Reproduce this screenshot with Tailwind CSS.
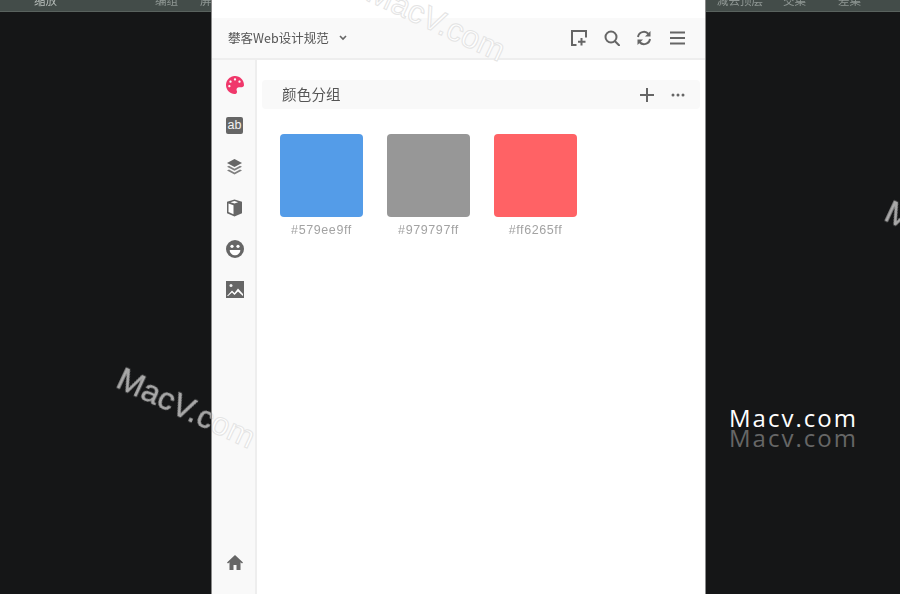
<!DOCTYPE html>
<html lang="en">
<head>
  <meta charset="UTF-8" />
  <meta name="viewport" content="width=device-width, initial-scale=1.0" />
  <title>Macv</title>
  <script src="https://cdn.jsdelivr.net/npm/@tailwindcss/browser@4"></script>
</head>
<body class="bg-[#151617] font-['Liberation_Sans','Noto_Sans_CJK_SC',sans-serif]">
  <div class="flex w-[900px] h-[594px] overflow-hidden">

    <!-- Left backdrop -->
    <div class="relative w-[211px] overflow-hidden">
      <div class="h-[12px] bg-[#434c49] border-b border-[#59625e] flex items-start text-[#b9bfbc] text-[11.500px] leading-[11px] blur-[0.5px] overflow-hidden">
        <span class="ml-[34px] w-[121px] shrink-0 font-['Noto_Sans_CJK_SC'] translate-y-[-5px]">缩放</span>
        <span class="w-[45px] shrink-0 font-['Noto_Sans_CJK_SC'] text-[#8f9794] translate-y-[-5px]">编组</span>
        <span class="font-['Noto_Sans_CJK_SC'] text-[#8f9794] translate-y-[-5px]">屏</span>
      </div>
      <span class="absolute left-[126px] top-[362px] rotate-[25deg] origin-top-left text-[32px] leading-none text-[#a9a9a9] [-webkit-text-stroke:0.5px_#a9a9a9] whitespace-nowrap blur-[0.4px]">MacV.com</span>
    </div>

    <!-- Panel -->
    <div class="relative w-[495px] shrink-0 bg-white border-x border-[#8a8a8a] flex flex-col overflow-hidden">
      <div class="h-[18px] shrink-0"></div>
      <header class="h-[42px] shrink-0 bg-[#f9f9f9] border-b-2 border-[#eeeeee] flex items-center pl-[16px] pr-[20px] text-[#666]">
        <span class="text-[12.500px] text-[#555] font-['Noto_Sans_CJK_SC'] blur-[0.3px]">攀客Web设计规范</span>
        <svg class="ml-[10px]" width="8" height="6" viewBox="0 0 8 6" fill="none" stroke="#666" stroke-width="1.6"><path d="M1 1l3 3 3-3"/></svg>
        <div class="ml-auto flex items-center">
          <svg width="16" height="16" viewBox="0 0 16 16" fill="none" stroke="#666" stroke-width="2"><path d="M5.500 15H1V1h14v6.500"/><path d="M10.500 8v7.500M7 11.700h7.500"/></svg>
          <svg class="ml-[17px]" width="16" height="16" viewBox="0 0 16 16" fill="none" stroke="#666" stroke-width="2"><circle cx="7" cy="7" r="5.500"/><path d="M11 11.200l4 4" stroke-linecap="round"/></svg>
          <svg class="ml-[16px]" width="16" height="16" viewBox="0 0 16 16" fill="none" stroke="#666" stroke-width="2"><path d="M2 7A6 6 0 0 1 12.500 4"/><path d="M14 9A6 6 0 0 1 3.500 12"/><path d="M14.500 1v5.500H9z" fill="#666" stroke="none"/><path d="M1.500 15V9.500H7z" fill="#666" stroke="none"/></svg>
          <svg class="ml-[18px]" width="15" height="16" viewBox="0 0 15 16" fill="none" stroke="#666" stroke-width="2"><path d="M0 2.500h15M0 8h15M0 13.500h15"/></svg>
        </div>
      </header>

      <div class="flex flex-1 min-h-0">
        <!-- Sidebar -->
        <aside class="w-[45px] shrink-0 bg-[#f9f9f9] border-r-2 border-[#eeeeee] flex flex-col items-center pl-[2px] pt-[4px] pb-[11px] text-[#666]">
          <div class="h-[41px] flex items-center">
            <svg width="18" height="18" viewBox="0 0 512 512" fill="#f0386b"><path d="M204.3 5C104.9 24.4 24.8 104.3 5.200 203.400c-37 187 131.700 326.400 258.800 306.700 41.200-6.400 61.400-54.600 42.500-91.700-23.100-45.400 9.900-98.400 60.900-98.400h79.700c35.800 0 64.800-29.600 64.900-65.300C511.500 97.100 368.100-26.900 204.300 5zM96 320c-17.700 0-32-14.300-32-32s14.300-32 32-32 32 14.300 32 32-14.300 32-32 32zm32-128c-17.700 0-32-14.300-32-32s14.300-32 32-32 32 14.300 32 32-14.300 32-32 32zm128-64c-17.700 0-32-14.300-32-32s14.300-32 32-32 32 14.300 32 32-14.300 32-32 32zm128 64c-17.700 0-32-14.300-32-32s14.300-32 32-32 32 14.300 32 32-14.300 32-32 32z"/></svg>
          </div>
          <div class="h-[41px] flex items-center">
            <span class="w-[17px] h-[17px] rounded-[2px] bg-[#666] text-[#f2f2f2] text-[12.500px] leading-[16px] text-center">ab</span>
          </div>
          <div class="h-[41px] flex items-center">
            <svg width="17" height="17" viewBox="0 0 17 17"><path d="M8.500 1L16 5l-7.500 4L1 5z" fill="#666"/><path d="M3 7.800l-2 1 7.500 4 7.500-4-2-1-5.500 3z" fill="#808080"/><path d="M3 11.500l-2 1 7.500 4 7.500-4-2-1-5.500 3z" fill="#808080"/></svg>
          </div>
          <div class="h-[41px] flex items-center">
            <svg width="17" height="18" viewBox="0 0 17 18"><path d="M8.500 0.500L1 2.800V14.200l7.500 3.300L16 14.200V2.800z" fill="#666"/><path d="M2.500 4.500L7.500 6.300v9L2.500 13z" fill="#fff"/><path d="M4.500 3.200l4-1.200 3.600 1.200-3.600 1.400z" fill="#fff"/></svg>
          </div>
          <div class="h-[41px] flex items-center">
            <svg width="18" height="18" viewBox="0 0 18 18"><circle cx="9" cy="9" r="9" fill="#666"/><circle cx="6" cy="6.300" r="1.600" fill="#fff"/><circle cx="12" cy="6.300" r="1.600" fill="#fff"/><path d="M3.700 10h10.600C14.300 13.200 11.700 15.300 9 15.300S3.700 13.200 3.700 10z" fill="#fff"/></svg>
          </div>
          <div class="h-[41px] flex items-center">
            <svg width="18" height="17" viewBox="0 0 18 17"><rect width="18" height="17" fill="#666"/><path d="M1 15l5-5.500 2.500 2.500 3.500-4.500 5 5.500v2H1z" fill="#fff"/><path d="M1 16l5-4.500 2.500 2.500 3.500-3.500 5 4.500v1H1z" fill="#666"/><circle cx="5" cy="4.500" r="1.500" fill="#f2f2f2"/></svg>
          </div>
          <div class="h-[41px] flex items-center mt-auto">
            <svg width="16" height="15" viewBox="0 0 16 15" fill="#666"><path d="M8 0L0 7.500l1 1L2.500 7.300V15h4v-5h3v5h4V7.300L15 8.500l1-1z"/></svg>
          </div>
        </aside>

        <!-- Main -->
        <main class="flex-1 pt-[20px] pl-[5px] pr-[5px]">
          <div class="h-[29px] rounded-[4px] bg-[#f9f9f9] flex items-center pl-[20px] pr-[15px]">
            <span class="text-[14.500px] leading-[20px] tracking-[0.2px] text-[#555] font-['Noto_Sans_CJK_SC'] blur-[0.3px] -translate-y-px">颜色分组</span>
            <svg class="ml-auto" width="16" height="16" viewBox="0 0 16 16" fill="none" stroke="#666" stroke-width="2"><path d="M8 1v14M1 8h14"/></svg>
            <svg class="ml-[16px]" width="14" height="4" viewBox="0 0 14 4" fill="#666"><circle cx="2" cy="2" r="1.500"/><circle cx="7" cy="2" r="1.500"/><circle cx="12" cy="2" r="1.500"/></svg>
          </div>
          <div class="flex gap-[24px] pl-[18px] pt-[25px]">
            <div class="w-[83px] flex flex-col items-center gap-[5px]">
              <div class="w-[83px] h-[83px] rounded-[4px] bg-[#549ce8]"></div>
              <span class="text-[12.500px] leading-[16px] tracking-[0.6px] text-[#a3a3a3] blur-[0.3px]">#579ee9ff</span>
            </div>
            <div class="w-[83px] flex flex-col items-center gap-[5px]">
              <div class="w-[83px] h-[83px] rounded-[4px] bg-[#979797]"></div>
              <span class="text-[12.500px] leading-[16px] tracking-[0.6px] text-[#a3a3a3] blur-[0.3px]">#979797ff</span>
            </div>
            <div class="w-[83px] flex flex-col items-center gap-[5px]">
              <div class="w-[83px] h-[83px] rounded-[4px] bg-[#ff6265]"></div>
              <span class="text-[12.500px] leading-[16px] tracking-[0.6px] text-[#a3a3a3] blur-[0.3px]">#ff6265ff</span>
            </div>
          </div>
        </main>
      </div>

      <!-- Watermarks over the panel -->
      <span class="absolute left-[-86px] top-[362px] rotate-[25deg] origin-top-left text-[32px] leading-none text-white [-webkit-text-stroke:1px_#e4e4e4] whitespace-nowrap">MacV.com</span>
      <span class="absolute left-[164px] top-[-25px] rotate-[25deg] origin-top-left text-[32px] leading-none text-white [-webkit-text-stroke:1px_#e4e4e4] whitespace-nowrap">MacV.com</span>
    </div>

    <!-- Right backdrop -->
    <div class="relative flex-1 overflow-hidden">
      <div class="h-[12px] bg-[#434c49] border-b border-[#59625e] flex items-start text-[#8f9794] text-[11.500px] leading-[11px] blur-[0.5px] overflow-hidden">
        <span class="ml-[11px] w-[66px] shrink-0 font-['Noto_Sans_CJK_SC'] translate-y-[-5px]">减去顶层</span>
        <span class="w-[55px] shrink-0 font-['Noto_Sans_CJK_SC'] translate-y-[-5px]">交集</span>
        <span class="font-['Noto_Sans_CJK_SC'] translate-y-[-5px]">差集</span>
      </div>
      <span class="absolute left-[188px] top-[195px] rotate-[25deg] origin-top-left text-[32px] leading-none text-[#a9a9a9] [-webkit-text-stroke:0.5px_#a9a9a9] whitespace-nowrap blur-[0.4px]">MacV.com</span>
      <div class="absolute left-[23px] top-[408px] font-['Open_Sans'] text-[24px] leading-[20px] tracking-[2px]">
        <div class="text-white">Macv.com</div>
        <div class="text-[#666]">Macv.com</div>
      </div>
    </div>
  </div>
</body>
</html>
